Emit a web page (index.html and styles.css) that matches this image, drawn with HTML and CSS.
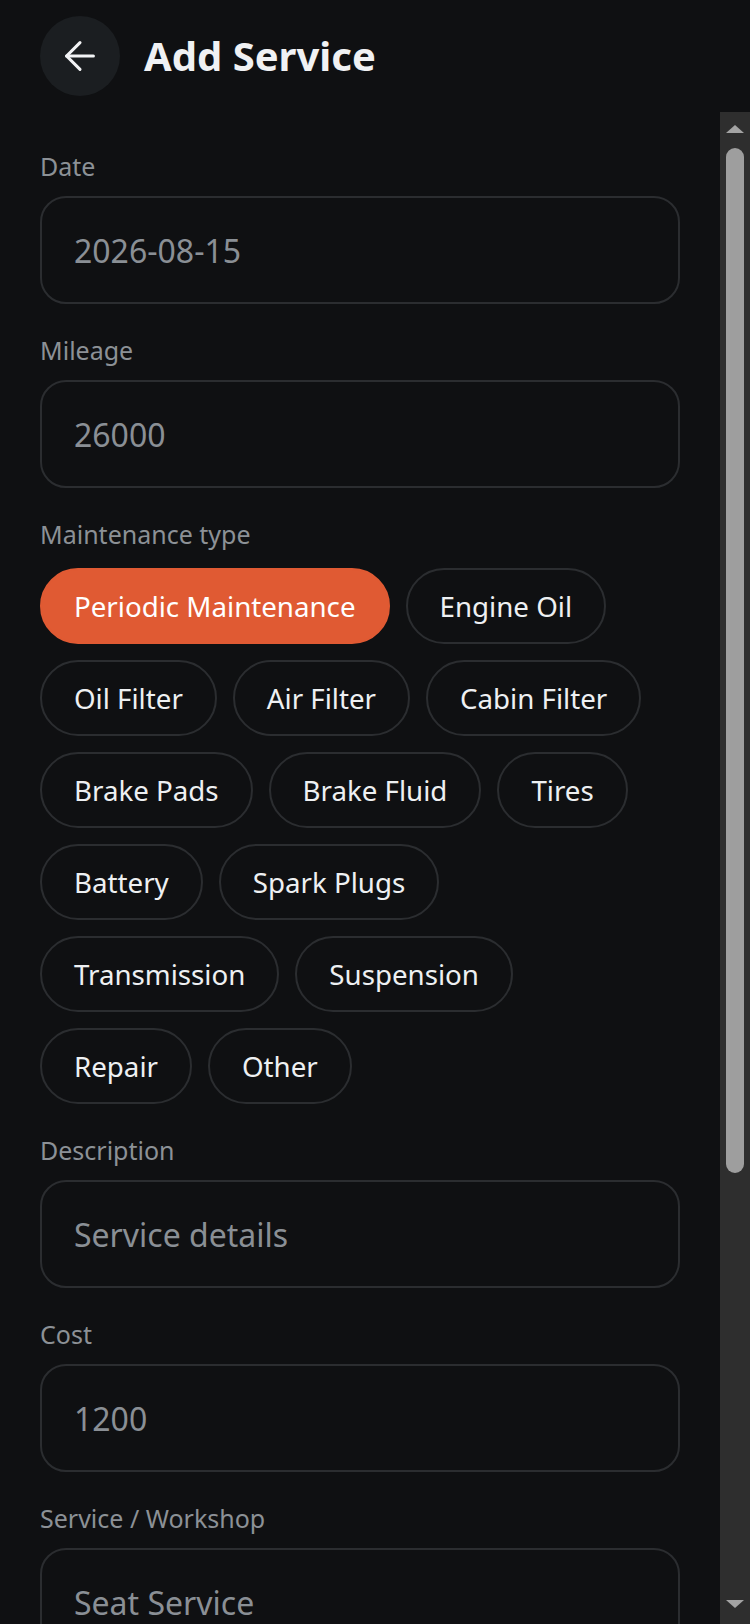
FILE: index.html
```html
<!DOCTYPE html>
<html lang="en">
<head>
    <meta charset="UTF-8">
    <meta name="viewport" content="width=device-width, initial-scale=1.0">
    <title>Add Service</title>
    <link rel="stylesheet" href="styles.css">
</head>
<body>
    <div class="screen">
        <header class="topbar">
            <button class="back-btn" aria-label="Back">
                <svg width="46" height="46" viewBox="0 0 24 24" fill="none" stroke="currentColor" stroke-width="1.6" stroke-linecap="round" stroke-linejoin="round">
                    <path d="M19 12H5"/>
                    <path d="M12 19l-7-7 7-7"/>
                </svg>
            </button>
            <h1>Add Service</h1>
        </header>

        <div class="body">
            <main class="form">
                <!-- Date -->
                <div class="field">
                    <label>Date</label>
                    <input class="input" type="text" placeholder="2026-08-15">
                </div>

                <!-- Mileage -->
                <div class="field">
                    <label>Mileage</label>
                    <input class="input" type="text" placeholder="26000">
                </div>

                <!-- Maintenance type -->
                <div class="field">
                    <label>Maintenance type</label>
                    <div class="chips">
                        <button class="chip active">Periodic Maintenance</button>
                        <button class="chip">Engine Oil</button>
                        <button class="chip">Oil Filter</button>
                        <button class="chip">Air Filter</button>
                        <button class="chip">Cabin Filter</button>
                        <button class="chip">Brake Pads</button>
                        <button class="chip">Brake Fluid</button>
                        <button class="chip">Tires</button>
                        <button class="chip">Battery</button>
                        <button class="chip">Spark Plugs</button>
                        <button class="chip">Transmission</button>
                        <button class="chip">Suspension</button>
                        <button class="chip">Repair</button>
                        <button class="chip">Other</button>
                    </div>
                </div>

                <!-- Description -->
                <div class="field">
                    <label>Description</label>
                    <input class="input" type="text" placeholder="Service details">
                </div>

                <!-- Cost -->
                <div class="field">
                    <label>Cost</label>
                    <input class="input" type="text" placeholder="1200">
                </div>

                <!-- Workshop -->
                <div class="field">
                    <label>Service / Workshop</label>
                    <input class="input" type="text" placeholder="Seat Service">
                </div>

                <!-- Notes -->
                <div class="field">
                    <label>Notes</label>
                    <textarea class="input notes" placeholder="Additional notes"></textarea>
                </div>

                <button class="save-btn">Save</button>
            </main>

            <!-- Scrollbar rail -->
            <div class="rail" aria-hidden="true">
                <div class="rail-btn"><span class="arrow up"></span></div>
                <div class="rail-track">
                    <div class="rail-thumb"></div>
                </div>
                <div class="rail-btn"><span class="arrow down"></span></div>
            </div>
        </div>
    </div>
</body>
</html>
```

FILE: styles.css
```css
/* Add Service screen */
* {
    box-sizing: border-box;
}

body {
    margin: 0;
    padding: 0;
    background-color: #0f1012;
    font-family: "Noto Sans", "Open Sans", sans-serif;
    color: #eef0f2;
}

.screen {
    height: 100vh;
    display: flex;
    flex-direction: column;
}

/* Header */
.topbar {
    flex: none;
    display: flex;
    align-items: center;
    gap: 24px;
    padding: 16px 40px;
}

.back-btn {
    width: 80px;
    height: 80px;
    border-radius: 50%;
    border: none;
    background-color: #1b1e21;
    color: #f2f3f5;
    display: flex;
    align-items: center;
    justify-content: center;
    padding: 0;
    cursor: pointer;
}

.topbar h1 {
    margin: 0;
    font-size: 40px;
    font-weight: 700;
    color: #f0f1f3;
    line-height: 1.2;
}

/* Form area + rail */
.body {
    flex: 1;
    min-height: 0;
    display: flex;
}

.form {
    flex: 1;
    min-width: 0;
    overflow: hidden;
    padding: 36px 40px 300px;
}

.rail {
    flex: none;
    width: 30px;
    display: flex;
    flex-direction: column;
    background-color: #2e2e2e;
}

.rail-btn {
    height: 36px;
    display: flex;
    justify-content: center;
}

.rail-track {
    flex: 1;
    padding: 0 6px;
}

.rail-thumb {
    height: 1025px;
    border-radius: 9px;
    background-color: #9e9e9e;
}

.arrow {
    width: 0;
    height: 0;
    border-left: 9px solid transparent;
    border-right: 9px solid transparent;
}

.arrow.up {
    margin-top: 13px;
    border-bottom: 8px solid #a3a3a3;
}

.arrow.down {
    margin-top: 12px;
    border-top: 8px solid #a3a3a3;
}

.field {
    display: flex;
    flex-direction: column;
    margin-bottom: 28px;
}

.field label {
    font-size: 25px;
    line-height: 36px;
    color: #8c9196;
    margin-bottom: 12px;
}

.input {
    height: 108px;
    width: 100%;
    border: 2px solid #2b2d30;
    border-radius: 26px;
    background-color: #0f1012;
    padding: 0 32px;
    font-family: inherit;
    font-size: 32px;
    color: #eef0f2;
    outline: none;
}

.input::placeholder {
    color: #8a8f95;
}

.notes {
    height: 200px;
    padding-top: 28px;
    resize: none;
}

/* Maintenance chips */
.chips {
    display: flex;
    flex-wrap: wrap;
    gap: 16px;
    margin-top: 4px;
}

.chip {
    height: 76px;
    padding: 0 32px;
    border: 2px solid #2b2d30;
    border-radius: 38px;
    background-color: #0f1012;
    color: #eef0f2;
    font-family: inherit;
    font-size: 27.7px;
    cursor: pointer;
}

.chip.active {
    background-color: #e05a33;
    border-color: #e05a33;
    color: #fff;
}

.save-btn {
    width: 100%;
    height: 104px;
    margin-top: 10px;
    border: none;
    border-radius: 26px;
    background-color: #e05a33;
    color: #fff;
    font-family: inherit;
    font-size: 30px;
    font-weight: 600;
}
```
